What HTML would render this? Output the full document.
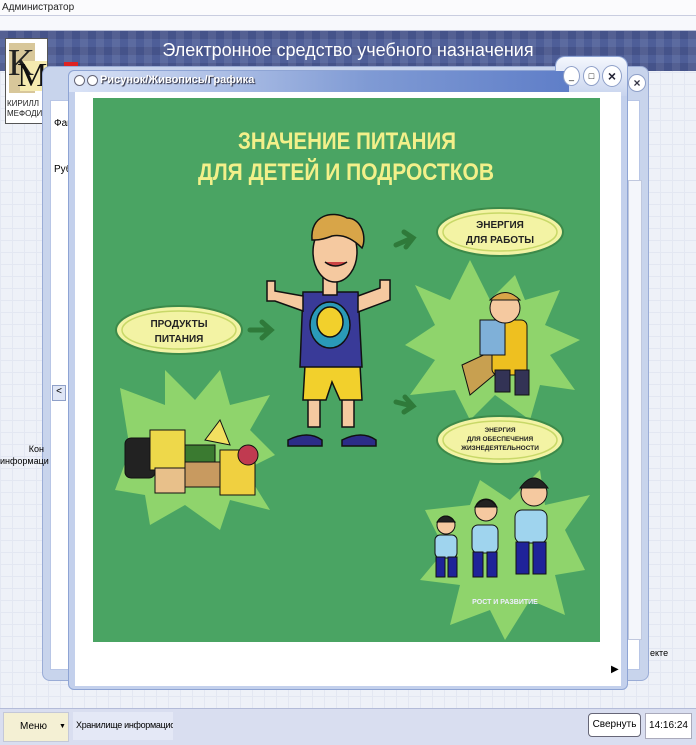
<!DOCTYPE html>
<html><head><meta charset="utf-8"><style>
*{margin:0;padding:0;box-sizing:border-box}
body{width:696px;height:745px;position:relative;overflow:hidden;background:#eef1f8;font-family:"Liberation Sans",sans-serif;
background-image:linear-gradient(#e3e7f2 1px,transparent 1px),linear-gradient(90deg,#e3e7f2 1px,transparent 1px);background-size:12px 12px}
.abs{position:absolute;white-space:nowrap}
</style></head><body>
<div class="abs" style="left:0;top:0;width:696px;height:16px;background:#fbfbfd;border-bottom:1px solid #c9cde0;font-size:10px;line-height:15px;padding-left:2px;color:#222">Администратор</div>
<div class="abs" style="left:0;top:16px;width:696px;height:15px;background:#f7f8fc;border-bottom:1px solid #b8bed6"></div>
<div class="abs" style="left:0;top:31px;width:696px;height:40px;background:#4e5e98;background-image:linear-gradient(90deg,rgba(255,255,255,.08) 50%,transparent 50%),linear-gradient(rgba(0,0,30,.12) 50%,transparent 50%);background-size:16px 16px,16px 16px"></div>
<div class="abs" style="left:0;top:40px;width:696px;text-align:center;color:#fff;font-size:18px">Электронное средство учебного назначения</div>
<div class="abs" style="left:5px;top:38px;width:43px;height:86px;background:#fff;border:1px solid #555;overflow:hidden">
<div class="abs" style="left:3px;top:4px;width:26px;height:50px;background:#d8c79a"></div>
<div class="abs" style="left:14px;top:22px;width:28px;height:30px;background:#f5eab0"></div>
<div class="abs" style="left:2px;top:2px;font:38px 'Liberation Serif',serif;color:#222">К</div>
<div class="abs" style="left:11px;top:18px;font:34px 'Liberation Serif',serif;color:#111">М</div>
<div class="abs" style="left:1px;top:60px;font-size:8px;line-height:10px;color:#222">КИРИЛЛ<br>МЕФОДИ</div></div>
<div class="abs" style="left:64px;top:62px;width:14px;height:6px;background:#d22"></div>
<div class="abs" style="left:42px;top:66px;width:607px;height:615px;background:#c8d4ec;border:1px solid #9aacd6;border-radius:8px"></div>
<div class="abs" style="left:50px;top:100px;width:590px;height:570px;background:#fff;border:1px solid #b8c6e6"></div>
<div class="abs" style="left:54px;top:118px;font-size:10px">Фай</div>
<div class="abs" style="left:54px;top:164px;font-size:10px">Руб</div>
<div class="abs" style="left:628px;top:74px;width:18px;height:18px;border-radius:50%;background:#fff;border:1px solid #8fa0c8;text-align:center;font-size:12px;line-height:16px;font-weight:bold;color:#334">×</div>
<div class="abs" style="left:628px;top:180px;width:14px;height:460px;background:#f4f6fb;border:1px solid #c0c8de"></div>
<div class="abs" style="left:52px;top:385px;width:14px;height:16px;background:#dfe6f6;border:1px solid #8fa0c8;font-size:10px;text-align:center">&lt;</div>
<div class="abs" style="left:0;top:443px;width:44px;text-align:right;font-size:9px;line-height:12px">Кон<br>информаци</div>
<div class="abs" style="left:650px;top:648px;font-size:9px">екте</div>
<div class="abs" style="left:68px;top:70px;width:560px;height:620px;background:#c3d0ec;border:1px solid #8ea4d4;border-radius:6px"></div>
<div class="abs" style="left:555px;top:56px;width:73px;height:40px;background:linear-gradient(#f4f7fd,#c8d4ee);border:1px solid #8ea4d4;border-bottom:none;border-radius:10px 10px 0 0"></div>
<div class="abs" style="left:69px;top:71px;width:500px;height:21px;background:linear-gradient(90deg,#dbe4f7,#7f9ad4 60%,#5f7ec8);border-radius:6px 0 0 0"></div>
<div class="abs" style="left:74px;top:75px;width:11px;height:11px;border-radius:50%;background:#fff;border:1px solid #667"></div>
<div class="abs" style="left:87px;top:75px;width:11px;height:11px;border-radius:50%;background:#fff;border:1px solid #667"></div>
<div class="abs" style="left:100px;top:74px;font-size:11px;color:#fff;font-weight:bold;text-shadow:1px 1px 1px #223">Рисунок/Живопись/Графика</div>
<div class="abs" style="left:563px;top:66px;width:17px;height:20px;border-radius:50%;background:#fff;border:1px solid #8fa0c8;font-size:9px;text-align:center;line-height:18px">_</div>
<div class="abs" style="left:583px;top:66px;width:17px;height:20px;border-radius:50%;background:#fff;border:1px solid #8fa0c8;font-size:9px;text-align:center;line-height:18px">□</div>
<div class="abs" style="left:602px;top:65px;width:20px;height:22px;border-radius:50%;background:#fff;border:1px solid #8fa0c8;font-size:14px;font-weight:bold;text-align:center;line-height:20px;color:#223">×</div>
<div class="abs" style="left:75px;top:92px;width:546px;height:594px;background:#fff"></div>
<div class="abs" style="left:611px;top:664px;font-size:10px">▶</div>
<svg class="abs" style="left:93px;top:98px" width="507" height="544" viewBox="93 98 507 544">
<rect x="93" y="98" width="507" height="544" fill="#4aa463"/>
<g font-family="Liberation Sans,sans-serif" font-weight="bold" fill="#f3f08a">
<text x="238" y="149" font-size="24" textLength="218" lengthAdjust="spacingAndGlyphs">ЗНАЧЕНИЕ ПИТАНИЯ</text>
<text x="198" y="180" font-size="24" textLength="296" lengthAdjust="spacingAndGlyphs">ДЛЯ ДЕТЕЙ И ПОДРОСТКОВ</text>
</g>
<g fill="#8fd46c">
<polygon points="120,388 165,405 165,370 195,400 220,370 230,405 270,395 250,430 275,455 245,470 270,510 230,500 220,530 185,505 150,525 145,495 115,490 130,450"/>
<polygon points="415,285 450,300 470,260 490,300 515,275 525,300 560,290 545,325 580,340 550,355 575,390 540,385 530,420 495,395 470,420 455,390 410,395 435,360 405,345 435,325"/>
<polygon points="425,510 470,505 480,480 510,500 540,470 545,505 590,495 565,530 585,570 555,575 565,615 530,600 505,640 490,610 450,625 460,585 420,580 445,550"/>
</g>
<g fill="#f3f3a4" stroke="#3c8a4a" stroke-width="2">
<ellipse cx="179" cy="330" rx="63" ry="24"/><ellipse cx="500" cy="232" rx="63" ry="24"/><ellipse cx="500" cy="440" rx="63" ry="24"/></g>
<g fill="none" stroke="#c8d868" stroke-width="1.5"><ellipse cx="179" cy="330" rx="57" ry="19"/><ellipse cx="500" cy="232" rx="57" ry="19"/><ellipse cx="500" cy="440" rx="57" ry="19"/></g>
<g font-family="Liberation Sans,sans-serif" font-weight="bold" text-anchor="middle" fill="#222">
<text x="179" y="327" font-size="10">ПРОДУКТЫ</text><text x="179" y="342" font-size="10">ПИТАНИЯ</text>
<text x="500" y="228" font-size="10">ЭНЕРГИЯ</text><text x="500" y="243" font-size="10">ДЛЯ РАБОТЫ</text>
<text x="500" y="432" font-size="6.5">ЭНЕРГИЯ</text><text x="500" y="441" font-size="6.5">ДЛЯ ОБЕСПЕЧЕНИЯ</text><text x="500" y="450" font-size="6.5">ЖИЗНЕДЕЯТЕЛЬНОСТИ</text>
<text x="505" y="604" font-size="7" fill="#eef">РОСТ И РАЗВИТИЕ</text></g>
<g stroke="#2f7a3a" stroke-width="5" fill="none" stroke-linecap="round"><path d="M250 330h20M262 322l9 8-9 8"/><path d="M396 245l16-7M404 232l9 6-7 9"/><path d="M396 402l16 4M405 397l8 9-9 6"/></g>
<g stroke="#111" stroke-width="1.5">
<rect x="308" y="322" width="12" height="105" fill="#f5c9a0"/><rect x="342" y="322" width="12" height="105" fill="#f5c9a0"/>
<path d="M305 365h55l2 35h-22l-8-18-6 18h-23z" fill="#f2d02c"/>
<path d="M303 292l55 0 4 75h-62z" fill="#393a98"/>
<ellipse cx="330" cy="325" rx="20" ry="23" fill="#2a9ab8"/><ellipse cx="330" cy="322" rx="13" ry="15" fill="#f2d02c"/>
<path d="M303 296l-28-5v-10h-8v20h8l28 10z" fill="#f5c9a0"/><path d="M358 296l22-8v-8h10v20l-32 12z" fill="#f5c9a0"/>
<rect x="323" y="275" width="14" height="20" fill="#f5c9a0"/>
<ellipse cx="335" cy="252" rx="22" ry="30" fill="#f5c9a0"/>
<path d="M312 240c-2-25 20-30 35-22 15 0 20 20 15 30-10-10-20-14-30-12-10 4-15 4-20 4z" fill="#d8a548"/>
<path d="M325 262q10 8 22 0" fill="#c44"/>
<path d="M288 440q20-10 34 0v6h-34z" fill="#2c2c88"/><path d="M342 440q20-10 34 0v6h-34z" fill="#2c2c88"/></g>
<g stroke="#111" stroke-width="1"><rect x="125" y="438" width="30" height="40" rx="6" fill="#222"/>
<rect x="150" y="430" width="35" height="40" fill="#eed84a"/><rect x="185" y="445" width="30" height="20" fill="#3a7a30"/>
<rect x="155" y="468" width="30" height="25" fill="#e8c08a"/><rect x="185" y="462" width="35" height="25" fill="#c89a60"/>
<rect x="220" y="450" width="35" height="45" fill="#f0d040"/><circle cx="248" cy="455" r="10" fill="#c03a50"/>
<polygon points="205,440 220,420 230,445" fill="#f2e060"/></g>
<g stroke="#111" stroke-width="1"><polygon points="462,365 505,345 512,360 470,395" fill="#c8a050"/>
<rect x="492" y="320" width="35" height="55" rx="6" fill="#eec020"/><rect x="480" y="320" width="25" height="35" fill="#7fb0d8"/>
<circle cx="505" cy="308" r="15" fill="#f5c9a0"/><path d="M490 300q15-15 30 0z" fill="#d8a548"/>
<rect x="495" y="370" width="15" height="22" fill="#335"/><rect x="515" y="370" width="14" height="25" fill="#335"/></g>
<g stroke="#111" stroke-width="1">
<rect x="435" y="535" width="22" height="23" rx="5" fill="#9fd4ee"/><circle cx="446" cy="525" r="9" fill="#f5c9a0"/><path d="M437 522q8-12 18 0z" fill="#222"/><rect x="436" y="557" width="9" height="20" fill="#1f2399"/><rect x="448" y="557" width="9" height="20" fill="#1f2399"/>
<rect x="472" y="525" width="26" height="28" rx="6" fill="#9fd4ee"/><circle cx="486" cy="510" r="11" fill="#f5c9a0"/><path d="M475 507q11-15 22 0z" fill="#222"/><rect x="473" y="552" width="10" height="25" fill="#1f2399"/><rect x="487" y="552" width="10" height="25" fill="#1f2399"/>
<rect x="515" y="510" width="32" height="33" rx="7" fill="#9fd4ee"/><circle cx="534" cy="493" r="13" fill="#f5c9a0"/><path d="M520 488q14-20 28 0z" fill="#222"/><rect x="516" y="542" width="13" height="32" fill="#1f2399"/><rect x="533" y="542" width="13" height="32" fill="#1f2399"/></g>
</svg>
<div class="abs" style="left:0;top:708px;width:696px;height:37px;background:#d9def0;border-top:1px solid #b3bbd8"></div>
<div class="abs" style="left:3px;top:712px;width:66px;height:30px;background:#f4f0d4;border:1px solid #c4c8d8;font-size:10px;line-height:28px;padding-left:16px">Меню<span style="position:absolute;left:55px;font-size:7px">▼</span></div>
<div class="abs" style="left:73px;top:712px;width:100px;height:28px;background:#e4e8f6;font-size:9px;line-height:26px;padding-left:3px;overflow:hidden;letter-spacing:-0.3px">Хранилище информацио...</div>
<div class="abs" style="left:588px;top:713px;width:53px;height:24px;background:#fff;border:1px solid #667;border-radius:4px;font-size:10px;line-height:22px;text-align:center">Свернуть</div>
<div class="abs" style="left:645px;top:713px;width:47px;height:26px;background:#fff;border:1px solid #aab;font-size:10px;line-height:24px;text-align:center">14:16:24</div>
</body></html>
